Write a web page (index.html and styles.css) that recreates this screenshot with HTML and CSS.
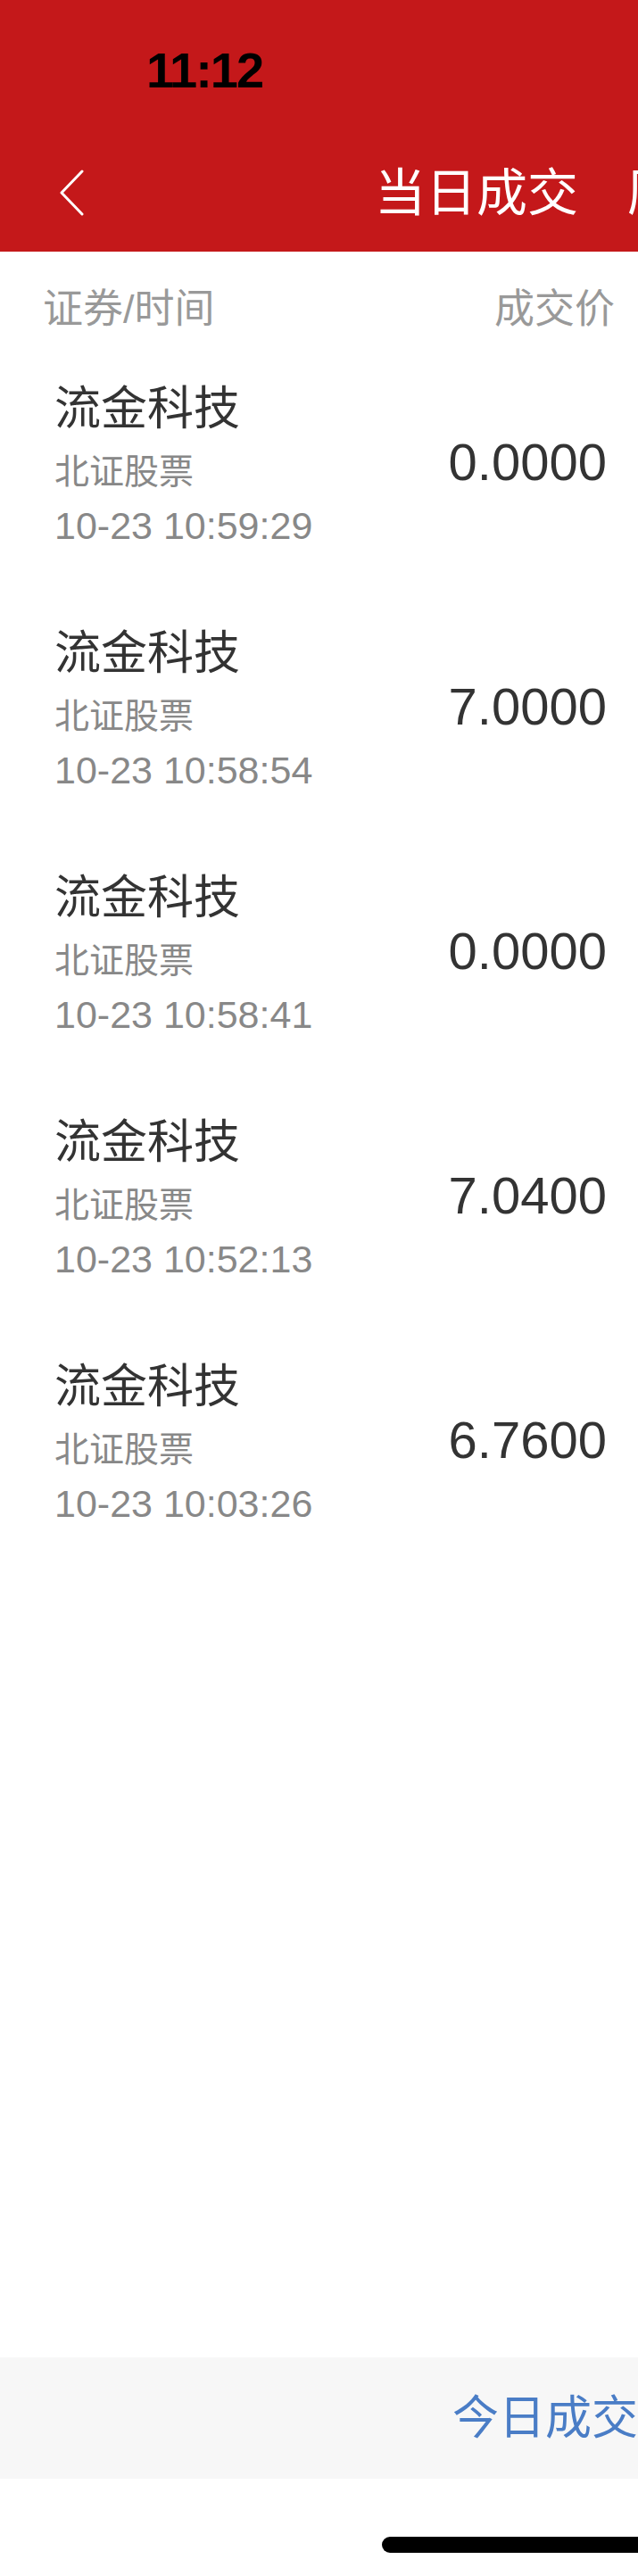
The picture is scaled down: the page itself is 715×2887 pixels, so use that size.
FILE: index.html
```html
<!DOCTYPE html>
<html lang="zh-CN">
<head>
    <meta charset="UTF-8">
    <meta name="viewport" content="width=device-width, initial-scale=1.0">
    <title>当日成交</title>
    <link rel="stylesheet" href="styles.css">
</head>
<body>
    <div class="screen">
        <header class="topbar">
            <div class="status">
                <span class="clock">11:12</span>
            </div>
            <nav class="navbar">
                <a class="back" href="#">
                    <svg width="30" height="52" viewBox="0 0 30 52">
                        <path d="M26 2 L3 26 L26 50" fill="none" stroke="#fff" stroke-width="3" stroke-linecap="round" stroke-linejoin="round"/>
                    </svg>
                </a>
                <div class="tabs">
                    <span class="tab active">当日成交</span>
                    <span class="tab">历史成交</span>
                </div>
            </nav>
        </header>

        <div class="thead">
            <span>证券/时间</span>
            <span>成交价</span>
        </div>

        <ul class="deals">
            <li class="deal">
                <div class="info">
                    <div class="name">流金科技</div>
                    <div class="market">北证股票</div>
                    <div class="time">10-23 10:59:29</div>
                </div>
                <div class="price">0.0000</div>
            </li>
            <li class="deal">
                <div class="info">
                    <div class="name">流金科技</div>
                    <div class="market">北证股票</div>
                    <div class="time">10-23 10:58:54</div>
                </div>
                <div class="price">7.0000</div>
            </li>
            <li class="deal">
                <div class="info">
                    <div class="name">流金科技</div>
                    <div class="market">北证股票</div>
                    <div class="time">10-23 10:58:41</div>
                </div>
                <div class="price">0.0000</div>
            </li>
            <li class="deal">
                <div class="info">
                    <div class="name">流金科技</div>
                    <div class="market">北证股票</div>
                    <div class="time">10-23 10:52:13</div>
                </div>
                <div class="price">7.0400</div>
            </li>
            <li class="deal">
                <div class="info">
                    <div class="name">流金科技</div>
                    <div class="market">北证股票</div>
                    <div class="time">10-23 10:03:26</div>
                </div>
                <div class="price">6.7600</div>
            </li>
        </ul>

        <div class="spacer"></div>

        <footer class="summary">今日成交</footer>
        <div class="home">
            <span class="indicator"></span>
        </div>
    </div>
</body>
</html>
```

FILE: styles.css
```css
body {
    margin: 0;
    padding: 0;
    background: #fff;
    font-family: "Liberation Sans", "Noto Sans CJK SC", sans-serif;
    overflow: hidden;
}
.screen {
    width: 715px;
    height: 2887px;
    display: flex;
    flex-direction: column;
    overflow: hidden;
}
.topbar {
    background: #c4181a;
    height: 282px;
    color: #fff;
    white-space: nowrap;
}
.status {
    height: 150px;
    box-sizing: border-box;
    padding: 49px 0 0 164px;
}
.clock {
    display: block;
    font-size: 56px;
    line-height: 60px;
    font-weight: bold;
    letter-spacing: -2px;
    color: #000;
}
.navbar {
    height: 132px;
    display: flex;
    align-items: center;
    padding-left: 66px;
}
.back {
    display: flex;
}
.tabs {
    margin-left: 324px;
    display: flex;
    gap: 55px;
}
.tab {
    font-size: 57px;
    line-height: 70px;
}
.thead {
    display: flex;
    justify-content: space-between;
    padding: 40px 26px 14px 48px;
    font-size: 45px;
    line-height: 50px;
    color: #999;
}
.deals {
    list-style: none;
    margin: 0;
    padding: 0;
}
.deal {
    height: 274px;
    box-sizing: border-box;
    display: flex;
    justify-content: space-between;
    align-items: center;
    padding: 40px 35px 41px 61px;
}
.name {
    font-size: 52px;
    line-height: 64px;
    color: #333;
}
.market {
    font-size: 39px;
    line-height: 60px;
    margin-top: 9px;
    color: #888;
}
.time {
    font-size: 43px;
    line-height: 60px;
    color: #888;
}
.price {
    font-size: 58px;
    line-height: 70px;
    color: #333;
    margin-bottom: 10px;
}
.spacer {
    flex: 1;
}
.summary {
    height: 136px;
    background: #f7f7f7;
    box-sizing: border-box;
    padding-left: 507px;
    font-size: 52px;
    line-height: 136px;
    color: #4a7dc6;
    white-space: nowrap;
    overflow: hidden;
}
.home {
    height: 109px;
    box-sizing: border-box;
    padding: 65px 0 0 428px;
}
.indicator {
    display: block;
    width: 420px;
    height: 18px;
    border-radius: 9px;
    background: #000;
}
```
